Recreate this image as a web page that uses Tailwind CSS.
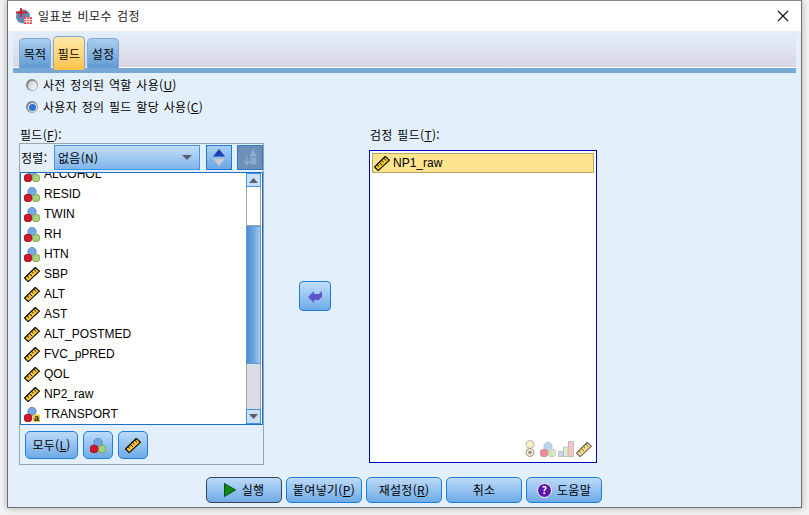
<!DOCTYPE html>
<html lang="ko"><head><meta charset="utf-8">
<script src="https://cdn.jsdelivr.net/npm/@tailwindcss/browser@4"></script>
</head>
<body class="w-[809px] h-[515px] overflow-hidden bg-[#f3f3f3] font-['Noto_Sans_CJK_KR','Liberation_Sans',sans-serif] text-[12px] text-black tracking-[0.3px] [word-spacing:1px]">
<svg width="0" height="0" class="absolute">
  <symbol id="ruler" viewBox="0 0 16 16">
    <path d="M.6 12 11.200 1.500 15.500 5.200 4.200 15.600Z" fill="#ffc92e" stroke="#000" stroke-width="1.100" stroke-linejoin="round"/>
    <path d="M3.200 9.800 5 11.500M5.500 7.600 8 10M7.700 5.400 9.500 7.100M9.900 3.300 12.300 5.600" stroke="#000" stroke-width="1" fill="none"/>
  </symbol>
  <symbol id="balls" viewBox="0 0 16 16">
    <circle cx="8" cy="5.600" r="4.200" fill="#74a8e4" stroke="#4d78ac" stroke-width=".7"/>
    <circle cx="12" cy="12" r="3.900" fill="#a6d07c" stroke="#6b9a4a" stroke-width=".7"/>
    <circle cx="4" cy="12" r="4" fill="#d8142c" stroke="#8f1020" stroke-width=".7"/>
  </symbol>
  <symbol id="bars" viewBox="0 0 16 16">
    <rect x=".5" y="10.500" width="4.500" height="5" fill="#9cc3ea" stroke="#999"/>
    <rect x="5.500" y="6" width="4.500" height="9.500" fill="#c7e6b0" stroke="#999"/>
    <rect x="10.500" y=".5" width="5" height="15" fill="#f59a9a" stroke="#999"/>
  </symbol>
</svg>

<div class="ml-[7px] w-[795px] h-[508px] border border-[#6f6f6f] border-t-[#8a8a8a] bg-[#e3effb] flex flex-col shadow-[0_0_7px_rgba(0,0,0,0.3)]">
  <!-- title bar -->
  <div class="h-[30px] bg-white flex items-center pl-[8px] pr-[10px] shrink-0">
    <svg width="16" height="16" viewBox="0 0 16 16" class="mr-[6px] shrink-0">
      <circle cx="7" cy="8.500" r="7" fill="#5f86b4"/>
      <path d="M0 4.500H11M5 0V9" stroke="#d3202c" stroke-width="1.800" fill="none"/>
      <rect x="8" y="9" width="8" height="7" fill="#e8504e"/>
      <path d="M8 11.500H16M8 13.700H16M10.700 9V16M13.300 9V16" stroke="#fff" stroke-width=".8"/>
    </svg>
    <span class="text-[#222] tracking-[0.5px]">일표본 비모수 검정</span>
    <svg width="12" height="12" viewBox="0 0 12 12" class="ml-auto mr-[2px]"><path d="M1 1 11 11M11 1 1 11" stroke="#111" stroke-width="1.100"/></svg>
  </div>

  <!-- tab strip -->
  <div class="mx-[5px] shrink-0 w-[783px]">
    <div class="h-[36px] bg-gradient-to-b from-[#e3effb] to-[#dad6e4] flex items-end pl-[6px] relative">
      <div class="w-[32px] h-[30px] -mb-px rounded-t-[5px] border border-[#7fa8d2] border-b-0 bg-gradient-to-b from-[#a9cdef] to-[#5f9ad2] flex items-center justify-center">목적</div>
      <div class="w-[32px] h-[34px] -mb-[3px] ml-[2px] rounded-t-[5px] border border-[#7fa8d2] border-b-0 bg-gradient-to-b from-[#ffe9a8] to-[#fdc246] flex items-center justify-center relative z-10">필드</div>
      <div class="w-[32px] h-[30px] -mb-px ml-[2px] rounded-t-[5px] border border-[#7fa8d2] border-b-0 bg-gradient-to-b from-[#a9cdef] to-[#5f9ad2] flex items-center justify-center">설정</div>
    </div>
    <div class="h-[6px] border-t border-white bg-[#76a7d5]"></div>
  </div>

  <!-- radios -->
  <div class="pl-[18px] shrink-0">
    <div class="h-[22px] mt-px flex items-center gap-[5px]">
      <span class="w-[12px] h-[12px] rounded-full bg-gradient-to-br from-[#777] to-[#b5b5b5] flex items-center justify-center"><span class="w-[9px] h-[9px] rounded-full bg-gradient-to-br from-[#c8c8c8] to-white"></span></span>
      <span>사전 정의된 역할 사용(<u>U</u>)</span>
    </div>
    <div class="h-[22px] flex items-center gap-[5px]">
      <span class="w-[12px] h-[12px] rounded-full bg-gradient-to-br from-[#777] to-[#b5b5b5] flex items-center justify-center"><span class="w-[9px] h-[9px] rounded-full bg-[#e4e8ee] flex items-center justify-center"><span class="w-[7px] h-[7px] rounded-full bg-[#2a72d4]"></span></span></span>
      <span>사용자 정의 필드 할당 사용(<u>C</u>)</span>
    </div>
  </div>

  <!-- columns -->
  <div class="flex h-[359px] mt-[8px] pl-[11px] shrink-0">
    <!-- left column -->
    <div class="w-[245px] shrink-0">
      <div class="h-[17px] pl-px flex items-center">필드(<u>F</u>):</div>
      <div class="h-[322px] border border-[#9aa5b0] flex flex-col">
        <div class="h-[28px] flex items-start pt-px shrink-0">
          <span class="w-[34px] pl-px h-[25px] flex items-center">정렬:</span>
          <div class="w-[146px] h-[25px] border border-[#3d95e8] bg-gradient-to-b from-[#c3def8] to-[#7fb5ea] flex items-center pl-[3px] pr-[7px]">
            <span>없음(N)</span>
            <svg width="10" height="5" viewBox="0 0 10 5" class="ml-auto"><path d="M0 0H10L5 5Z" fill="#5a5f6a"/></svg>
          </div>
          <div class="w-[26px] h-[25px] ml-[6px] border-[1.5px] border-[#1c78d6] bg-gradient-to-b from-[#a9d0f5] to-[#6aa6e0] flex flex-col items-center justify-center">
            <svg width="12" height="17" viewBox="0 0 12 17"><path d="M6 0 12 7.500H0Z" fill="#1f40b0"/><path d="M0 9.500H12L6 17Z" fill="#c9c9cf"/></svg>
          </div>
          <div class="w-[26px] h-[25px] ml-[5px] border border-[#2a78c8] bg-[#6c90b8] flex items-center justify-center relative">
            <svg width="18" height="17" viewBox="0 0 18 17"><path d="M12 1 15 7H9ZM6 7V15M3 12 6 16 9 12M10 9H15V15H10Z" fill="#8daccb" stroke="#8daccb"/></svg>
          </div>
        </div>
        <!-- field list -->
        <div class="h-[253px] w-[243px] border border-[#1c6fc0] bg-white flex shrink-0 overflow-hidden tracking-normal [word-spacing:0]">
          <div class="flex-1 overflow-hidden font-['Liberation_Sans',sans-serif]">
            <div class="-mt-[9px] pl-[3px]">
              <div class="h-[20px] flex items-center gap-[4px]"><svg width="16" height="16"><use href="#balls"/></svg>ALCOHOL</div>
              <div class="h-[20px] flex items-center gap-[4px]"><svg width="16" height="16"><use href="#balls"/></svg>RESID</div>
              <div class="h-[20px] flex items-center gap-[4px]"><svg width="16" height="16"><use href="#balls"/></svg>TWIN</div>
              <div class="h-[20px] flex items-center gap-[4px]"><svg width="16" height="16"><use href="#balls"/></svg>RH</div>
              <div class="h-[20px] flex items-center gap-[4px]"><svg width="16" height="16"><use href="#balls"/></svg>HTN</div>
              <div class="h-[20px] flex items-center gap-[4px]"><svg width="16" height="16"><use href="#ruler"/></svg>SBP</div>
              <div class="h-[20px] flex items-center gap-[4px]"><svg width="16" height="16"><use href="#ruler"/></svg>ALT</div>
              <div class="h-[20px] flex items-center gap-[4px]"><svg width="16" height="16"><use href="#ruler"/></svg>AST</div>
              <div class="h-[20px] flex items-center gap-[4px]"><svg width="16" height="16"><use href="#ruler"/></svg>ALT_POSTMED</div>
              <div class="h-[20px] flex items-center gap-[4px]"><svg width="16" height="16"><use href="#ruler"/></svg>FVC_pPRED</div>
              <div class="h-[20px] flex items-center gap-[4px]"><svg width="16" height="16"><use href="#ruler"/></svg>QOL</div>
              <div class="h-[20px] flex items-center gap-[4px]"><svg width="16" height="16"><use href="#ruler"/></svg>NP2_raw</div>
              <div class="h-[20px] flex items-center gap-[4px]">
                <svg width="16" height="16" viewBox="0 0 16 16"><circle cx="8" cy="5.500" r="4.200" fill="#74a8e4" stroke="#4d78ac" stroke-width=".7"/><circle cx="4" cy="12" r="4" fill="#d8142c" stroke="#8f1020" stroke-width=".7"/><rect x="9" y="8.500" width="7" height="7.500" fill="#fcc93a"/><text x="12.500" y="15" font-size="9" font-weight="700" text-anchor="middle" fill="#111" font-family="Liberation Sans">a</text></svg>TRANSPORT</div>
            </div>
          </div>
          <!-- scrollbar -->
          <div class="w-[15px] mr-px flex flex-col shrink-0">
            <div class="h-[14px] border border-[#3d95e8] bg-[#c9e0f7] flex items-center justify-center"><svg width="9" height="5" viewBox="0 0 9 5"><path d="M4.500 0 9 5H0Z" fill="#5b6068"/></svg></div>
            <div class="h-[39px] border-x border-b border-[#9aa4ae] bg-white"></div>
            <div class="h-[138px] border border-[#5a9be0] bg-gradient-to-r from-[#4f8ccb] via-[#6ea5dc] to-[#a6cbee]"></div>
            <div class="flex-1 border-x border-[#9aa4ae] bg-[#dcdce6]"></div>
            <div class="h-[15px] border border-[#3d95e8] bg-[#c9e0f7] flex items-center justify-center"><svg width="9" height="5" viewBox="0 0 9 5"><path d="M0 0H9L4.500 5Z" fill="#5b6068"/></svg></div>
          </div>
        </div>
        <!-- filter buttons -->
        <div class="flex pl-[5px] pt-[6px] gap-[5px]">
          <div class="w-[53px] h-[28px] rounded-[5px] border border-[#1a80e0] bg-gradient-to-b from-[#bcdaf8] to-[#6faae6] flex items-center justify-center">모두(<u>L</u>)</div>
          <div class="w-[30px] h-[28px] rounded-[5px] border border-[#1a80e0] bg-gradient-to-b from-[#bcdaf8] to-[#6faae6] flex items-center justify-center"><svg width="16" height="16"><use href="#balls"/></svg></div>
          <div class="w-[30px] h-[28px] rounded-[5px] border border-[#1a80e0] bg-gradient-to-b from-[#bcdaf8] to-[#6faae6] flex items-center justify-center"><svg width="16" height="16"><use href="#ruler"/></svg></div>
        </div>
      </div>
    </div>

    <!-- move button -->
    <div class="w-[105px] shrink-0 pl-[35px] pt-[155px]">
      <div class="w-[32px] h-[30px] rounded-[4px] border border-[#1a80e0] bg-gradient-to-b from-[#c3def8] to-[#6faae6]">
        <svg width="30" height="28" viewBox="0 0 30 28"><path d="M8 15 14 9V12H19L22 9V14.500L19 18H14V21Z" fill="#5a55c8"/></svg>
      </div>
    </div>

    <!-- right column -->
    <div class="w-[228px] shrink-0">
      <div class="h-[18px] pl-px flex items-center">검정 필드(<u>T</u>):</div>
      <div class="mt-[6px] h-[313px] border border-[#0000c4] bg-white flex flex-col p-[2px]">
        <div class="h-[20px] border border-[#b8a55f] bg-[#ffe48f] flex items-center gap-[3px] pl-px font-['Liberation_Sans',sans-serif] tracking-normal shrink-0"><svg width="16" height="16"><use href="#ruler"/></svg>NP1_raw</div>
        <div class="mt-auto flex items-end justify-end pr-[2px] pb-[3px] gap-[2px] opacity-60">
          <svg width="10" height="17" viewBox="0 0 10 17" class="mr-[3px]"><circle cx="5" cy="4.500" r="4" fill="#fce39a" stroke="#888"/><circle cx="5" cy="12.500" r="4" fill="#fce39a" stroke="#555"/><circle cx="5" cy="12.500" r="1.800" fill="#444"/></svg>
          <svg width="16" height="16" class="opacity-80"><use href="#balls"/></svg>
          <svg width="16" height="16"><use href="#bars"/></svg>
          <svg width="16" height="16"><use href="#ruler"/></svg>
        </div>
      </div>
    </div>
  </div>

  <!-- footer buttons -->
  <div class="flex gap-[4px] pl-[198px] mt-[-8px] shrink-0 relative">
    <div class="w-[76px] h-[26px] rounded-[5px] border-[1.5px] border-[#33465c] bg-gradient-to-b from-[#bcdaf8] to-[#6faae6] flex items-center justify-center gap-[6px]">
      <svg width="12" height="14" viewBox="0 0 12 14"><path d="M.5.500 11.500 7 .5 13.500Z" fill="#0b8a12" stroke="#0b4f10"/></svg>실행</div>
    <div class="w-[76px] h-[26px] rounded-[5px] border border-[#1a80e0] bg-gradient-to-b from-[#bcdaf8] to-[#6faae6] flex items-center justify-center">붙여넣기(<u>P</u>)</div>
    <div class="w-[76px] h-[26px] rounded-[5px] border border-[#1a80e0] bg-gradient-to-b from-[#bcdaf8] to-[#6faae6] flex items-center justify-center">재설정(<u>R</u>)</div>
    <div class="w-[76px] h-[26px] rounded-[5px] border border-[#1a80e0] bg-gradient-to-b from-[#bcdaf8] to-[#6faae6] flex items-center justify-center">취소</div>
    <div class="w-[76px] h-[26px] rounded-[5px] border border-[#1a80e0] bg-gradient-to-b from-[#bcdaf8] to-[#6faae6] flex items-center justify-center gap-[5px]">
      <span class="w-[15px] h-[15px] rounded-full bg-[#5b16a8] border border-white text-white text-[10px] font-bold flex items-center justify-center leading-none">?</span>도움말</div>
  </div>
</div>
</body></html>
